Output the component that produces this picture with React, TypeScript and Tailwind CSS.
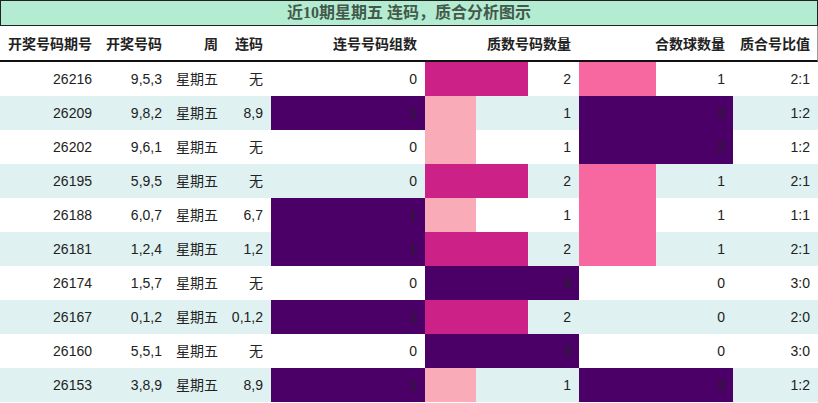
import React from "react";

type Row = {
  id: string;
  nums: string;
  week: string;
  lian: string;
  groups: number;
  prime: number;
  comp: number;
  ratio: string;
};

const rows: Row[] = [
  { id: "26216", nums: "9,5,3", week: "星期五", lian: "无", groups: 0, prime: 2, comp: 1, ratio: "2:1" },
  { id: "26209", nums: "9,8,2", week: "星期五", lian: "8,9", groups: 1, prime: 1, comp: 2, ratio: "1:2" },
  { id: "26202", nums: "9,6,1", week: "星期五", lian: "无", groups: 0, prime: 1, comp: 2, ratio: "1:2" },
  { id: "26195", nums: "5,9,5", week: "星期五", lian: "无", groups: 0, prime: 2, comp: 1, ratio: "2:1" },
  { id: "26188", nums: "6,0,7", week: "星期五", lian: "6,7", groups: 1, prime: 1, comp: 1, ratio: "1:1" },
  { id: "26181", nums: "1,2,4", week: "星期五", lian: "1,2", groups: 1, prime: 2, comp: 1, ratio: "2:1" },
  { id: "26174", nums: "1,5,7", week: "星期五", lian: "无", groups: 0, prime: 3, comp: 0, ratio: "3:0" },
  { id: "26167", nums: "0,1,2", week: "星期五", lian: "0,1,2", groups: 1, prime: 2, comp: 0, ratio: "2:0" },
  { id: "26160", nums: "5,5,1", week: "星期五", lian: "无", groups: 0, prime: 3, comp: 0, ratio: "3:0" },
  { id: "26153", nums: "3,8,9", week: "星期五", lian: "8,9", groups: 1, prime: 1, comp: 2, ratio: "1:2" },
];

const PURPLE = "#4b0068";
const groupColor = (v: number) => (v >= 1 ? PURPLE : "transparent");
const primeColor = (v: number) =>
  v === 1 ? "#f9abb7" : v === 2 ? "#cc2288" : v === 3 ? PURPLE : "transparent";
const compColor = (v: number) => (v === 1 ? "#f767a0" : v === 2 ? PURPLE : "transparent");

function BarCell({ value, max, color }: { value: number; max: number; color: string }) {
  return (
    <div className="relative flex h-full items-center justify-end pr-2">
      <div
        className="absolute left-0 top-0 bottom-0"
        style={{ width: `${(value / max) * 100}%`, backgroundColor: color }}
      />
      <span className="relative">{value}</span>
    </div>
  );
}

const grid = "grid grid-cols-[100px_70px_56px_45px_154px_154px_154px_85px]";

export default function App() {
  return (
    <div
      className="w-[818px] h-[403px] bg-white overflow-hidden text-[#222]"
      style={{ fontFamily: '"Liberation Sans", "Noto Sans CJK SC", sans-serif' }}
    >
      <div
        className="h-[26px] border border-[#222] bg-[#b3ecd0] flex items-center justify-center text-[16px] font-bold text-[#43594c]"
        style={{ fontFamily: '"Liberation Serif", "Noto Sans CJK SC", serif' }}
      >
        近10期星期五 连码，质合分析图示
      </div>
      <div
        className={`${grid} h-[36px] items-center border-b-2 border-[#111] border-r border-r-[#999] text-[14px] font-bold text-right`}
        style={{ fontFamily: '"Noto Sans CJK SC", sans-serif' }}
      >
        <div className="pr-2">开奖号码期号</div>
        <div className="pr-2">开奖号码</div>
        <div className="pr-2">周</div>
        <div className="pr-2">连码</div>
        <div className="pr-2">连号号码组数</div>
        <div className="pr-2">质数号码数量</div>
        <div className="pr-2">合数球数量</div>
        <div className="pr-2">质合号比值</div>
      </div>
      {rows.map((r, i) => (
        <div
          key={r.id}
          className={`${grid} h-[34px] items-center text-[14px] text-right ${i % 2 === 1 ? "bg-[#dff1f1]" : "bg-white"}`}
        >
          <div className="pr-2">{r.id}</div>
          <div className="pr-2">{r.nums}</div>
          <div className="pr-2">{r.week}</div>
          <div className="pr-2">{r.lian}</div>
          <BarCell value={r.groups} max={1} color={groupColor(r.groups)} />
          <BarCell value={r.prime} max={3} color={primeColor(r.prime)} />
          <BarCell value={r.comp} max={2} color={compColor(r.comp)} />
          <div className="pr-2">{r.ratio}</div>
        </div>
      ))}
    </div>
  );
}
